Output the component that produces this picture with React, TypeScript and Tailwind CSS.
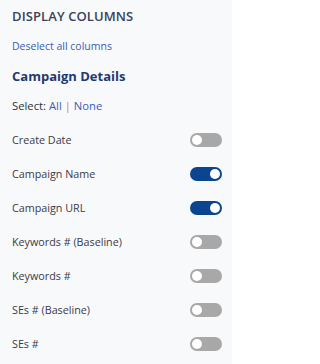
import React, { useState } from "react";

type Item = { label: string; on: boolean };

const initial: Item[] = [
  { label: "Create Date", on: false },
  { label: "Campaign Name", on: true },
  { label: "Campaign URL", on: true },
  { label: "Keywords # (Baseline)", on: false },
  { label: "Keywords #", on: false },
  { label: "SEs # (Baseline)", on: false },
  { label: "SEs #", on: false },
];

function Toggle({ on, onClick }: { on: boolean; onClick: () => void }) {
  return (
    <button
      onClick={onClick}
      className={`relative w-[32px] h-[14px] rounded-full ${on ? "bg-[#0b4590]" : "bg-[#a8a8a8]"}`}
    >
      <span
        className={`absolute top-[2px] w-[10px] h-[10px] rounded-full bg-white ${on ? "left-[20px]" : "left-[2px]"}`}
      />
    </button>
  );
}

export default function App() {
  const [items, setItems] = useState(initial);
  return (
    <div
      className="w-[232px] h-[364px] bg-[#f8f9fb] pl-[12px] pr-[10px] pt-[6px] overflow-hidden"
      style={{ fontFamily: '"Open Sans", sans-serif' }}
    >
      <div className="text-[13px] leading-[20px] font-semibold text-[#3a4257] tracking-[0.1px]">
        DISPLAY COLUMNS
      </div>
      <div className="mt-[12px] text-[10.5px] leading-[16px] text-[#3b5cb5]">
        Deselect all columns
      </div>
      <div className="mt-[12px] text-[13px] leading-[20px] font-bold text-[#1e3a72]">
        Campaign Details
      </div>
      <div className="mt-[12px] text-[11.25px] leading-[16px] text-[#333333]">
        Select: <span className="text-[#3b5cb5]">All</span>{" "}
        <span className="text-[#e07b3c]">|</span>{" "}
        <span className="text-[#3b5cb5]">None</span>
      </div>
      <div className="mt-[9px] flex flex-col">
        {items.map((it, i) => (
          <div key={it.label} className="h-[34px] flex items-center justify-between">
            <span className="text-[10.75px] text-[#3a3a48]">{it.label}</span>
            <Toggle
              on={it.on}
              onClick={() =>
                setItems(items.map((x, j) => (j === i ? { ...x, on: !x.on } : x)))
              }
            />
          </div>
        ))}
      </div>
    </div>
  );
}
